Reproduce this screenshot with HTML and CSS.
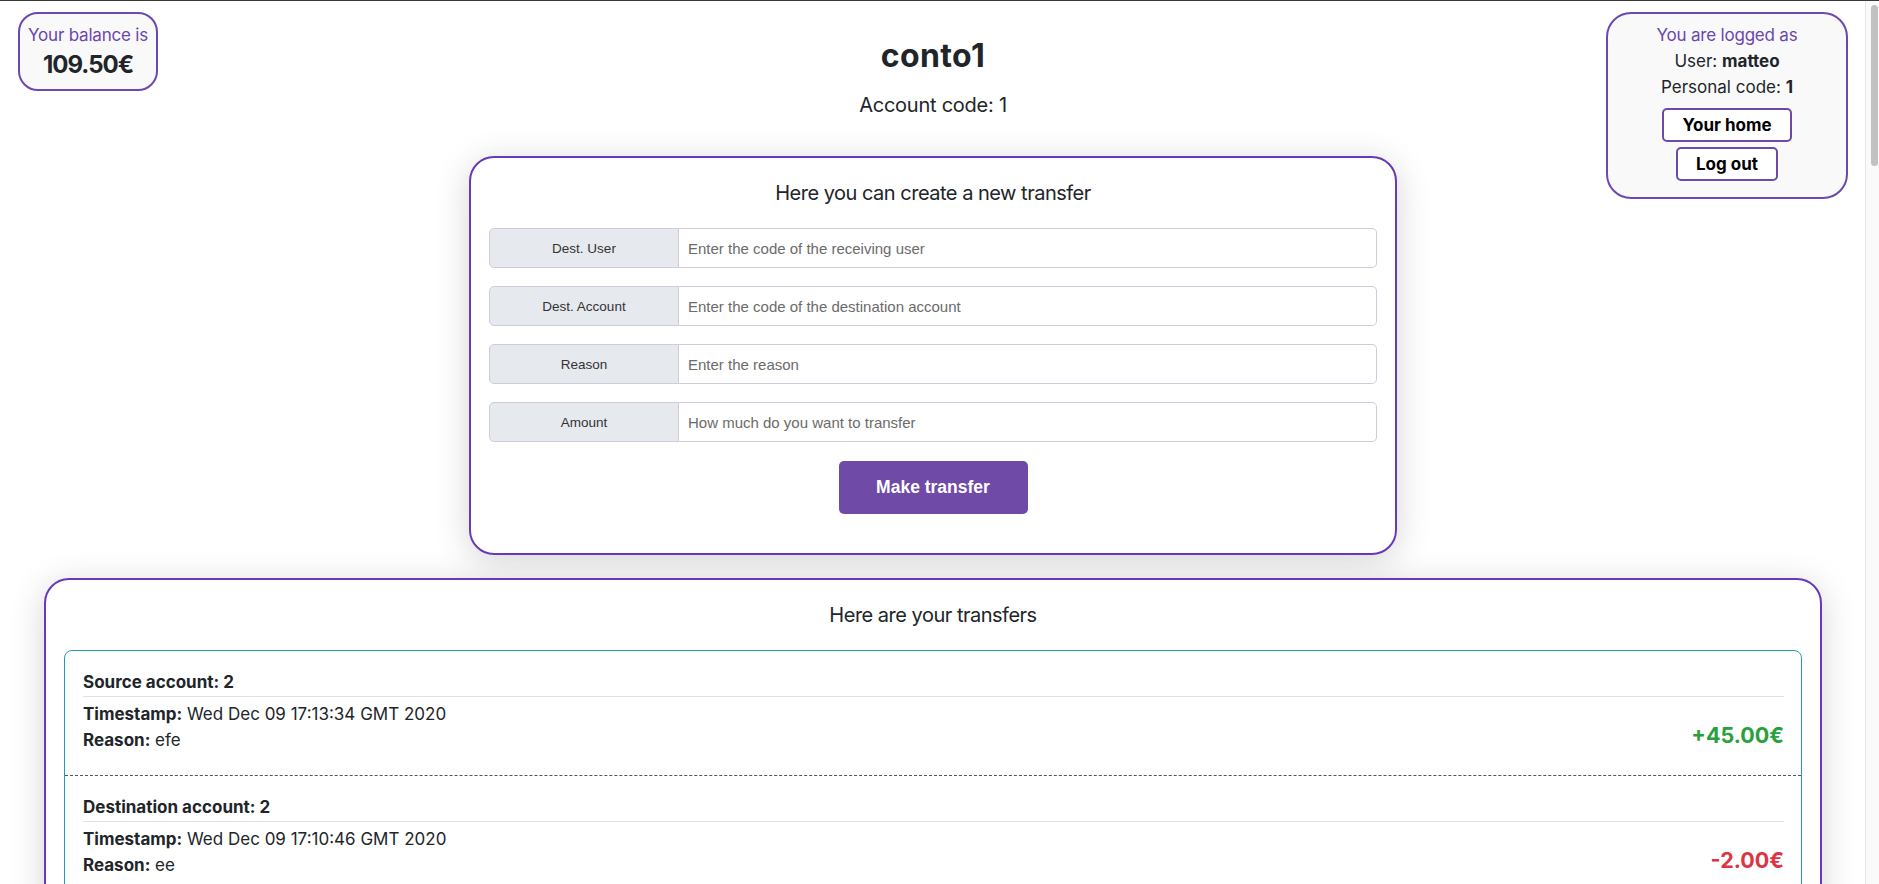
FILE: index.html
```html
<!DOCTYPE html>
<html lang="en">
<head>
<meta charset="utf-8">
<title>conto1</title>
<link rel="stylesheet" href="styles.css">
</head>
<body>
<div class="viewport">
  <div class="page">
    <header class="top">
      <div class="balance">
        <div class="label">Your balance is</div>
        <div class="balance-value">109.50€</div>
      </div>
      <div class="account-head">
        <h2 class="account-name">conto1</h2>
        <div class="account-code">Account code: 1</div>
      </div>
      <div class="logged">
        <div class="label">You are logged as</div>
        <div class="info">User: <b>matteo</b></div>
        <div class="info">Personal code: <b>1</b></div>
        <div class="logged-actions">
          <button class="outline-btn" type="button">Your home</button>
          <button class="outline-btn" type="button">Log out</button>
        </div>
      </div>
    </header>

    <section class="card form-card">
      <h3 class="card-title">Here you can create a new transfer</h3>
      <div class="field"><span class="addon">Dest. User</span><input class="field-input" type="text" placeholder="Enter the code of the receiving user"></div>
      <div class="field"><span class="addon">Dest. Account</span><input class="field-input" type="text" placeholder="Enter the code of the destination account"></div>
      <div class="field"><span class="addon">Reason</span><input class="field-input" type="text" placeholder="Enter the reason"></div>
      <div class="field"><span class="addon">Amount</span><input class="field-input" type="text" placeholder="How much do you want to transfer"></div>
      <button class="primary-btn" type="button">Make transfer</button>
    </section>

    <section class="card transfers-card">
      <h3 class="card-title">Here are your transfers</h3>
      <div class="transfer-list">
        <div class="transfer">
          <div class="transfer-head">Source account: 2</div>
          <div class="transfer-body">
            <div class="transfer-details">
              <div><b>Timestamp:</b> Wed Dec 09 17:13:34 GMT 2020</div>
              <div><b>Reason:</b> efe</div>
            </div>
            <div class="amount plus">+45.00€</div>
          </div>
        </div>
        <div class="transfer">
          <div class="transfer-head">Destination account: 2</div>
          <div class="transfer-body">
            <div class="transfer-details">
              <div><b>Timestamp:</b> Wed Dec 09 17:10:46 GMT 2020</div>
              <div><b>Reason:</b> ee</div>
            </div>
            <div class="amount minus">-2.00€</div>
          </div>
        </div>
      </div>
    </section>
  </div>
  <div class="scrollbar"><div class="thumb"></div></div>
</div>
</body>
</html>
```
FILE: styles.css
```css
html, body {
  margin: 0;
  height: 100%;
  overflow: hidden;
}
body {
  border-top: 1px solid #3a3a3a;
  box-sizing: border-box;
  font-family: Inter, "Noto Sans", sans-serif;
  color: #212529;
  background: #fff;
}
.viewport {
  display: flex;
  height: 883px;
}
.page {
  flex: 1;
  min-width: 0;
  overflow: hidden;
  padding: 11px 17px 0 18px;
}
.scrollbar {
  flex: none;
  width: 14px;
  box-sizing: border-box;
  background: #fafafa;
  border-left: 1px solid #e6e6e6;
  padding: 4px 1px 0 5px;
}
.thumb {
  height: 161px;
  background: #c1c1c1;
  border-radius: 4px;
}

/* header */
.top {
  display: grid;
  grid-template-columns: 1fr auto 1fr;
  height: 144px;
  align-items: start;
}
.balance {
  justify-self: start;
  width: 140px;
  box-sizing: border-box;
  border: 2px solid #6c48b0;
  border-radius: 20px;
  background: #f9f9f9;
  text-align: center;
  padding: 8px 0 9px;
}
.label {
  color: #6b46b0;
  font-size: 17px;
  line-height: 26px;
  letter-spacing: -0.2px;
}
.balance-value {
  font-size: 24px;
  font-weight: 700;
  line-height: 30px;
  margin-top: 2px;
  letter-spacing: -1px;
}
.account-head {
  text-align: center;
}
.account-name {
  margin: 25px 0 0;
  font-size: 32px;
  font-weight: 700;
  line-height: 38px;
  letter-spacing: 0.4px;
}
.account-code {
  margin-top: 18px;
  font-size: 20px;
  line-height: 24px;
  letter-spacing: -0.25px;
}
.logged {
  justify-self: end;
  width: 242px;
  box-sizing: border-box;
  border: 2px solid #6c48b0;
  border-radius: 25px;
  background: #f9f9f9;
  text-align: center;
  padding: 8px 0 16px;
}
.info {
  font-size: 17px;
  line-height: 26px;
}
.logged-actions {
  margin-top: 8px;
  display: flex;
  flex-direction: column;
  align-items: center;
  gap: 5px;
}
.outline-btn {
  height: 34px;
  padding: 0 18px;
  border: 2px solid #6d4aaa;
  border-radius: 5px;
  background: #fff;
  color: #000;
  font-family: Inter, "Noto Sans", sans-serif;
  font-size: 17px;
  font-weight: 700;
}

/* cards */
.card {
  border: 2px solid #673ab7;
  border-radius: 25px;
  background: #fff;
  box-shadow: 0 6px 34px rgba(0, 0, 0, 0.17);
}
.card-title {
  margin: 0 0 23px;
  font-size: 20px;
  font-weight: 400;
  line-height: 24px;
  text-align: center;
  letter-spacing: -0.5px;
}
.form-card {
  width: 928px;
  box-sizing: border-box;
  margin: 0 auto;
  padding: 23px 18px 39px;
}
.field {
  display: flex;
  height: 40px;
  margin-bottom: 18px;
}
.field:last-of-type {
  margin-bottom: 0;
}
.addon {
  flex: none;
  width: 190px;
  box-sizing: border-box;
  display: flex;
  align-items: center;
  justify-content: center;
  background: #e6e9ee;
  border: 1px solid #cfcbdc;
  border-radius: 5px 0 0 5px;
  font-family: "Liberation Sans", Arial, sans-serif;
  font-size: 13.5px;
  color: #333;
}
.field-input {
  flex: 1;
  min-width: 0;
  box-sizing: border-box;
  height: 40px;
  margin: 0;
  padding: 0 9px;
  border: 1px solid #cfcbdc;
  border-left: none;
  border-radius: 0 5px 5px 0;
  background: #fff;
  outline: none;
  font-family: "Liberation Sans", Arial, sans-serif;
  font-size: 15px;
  color: #333;
}
.field-input::placeholder {
  color: #6b6b6b;
  opacity: 1;
}
.primary-btn {
  display: block;
  width: 189px;
  height: 53px;
  margin: 19px auto 0;
  border: none;
  border-radius: 5px;
  background: #6f4aa7;
  color: #fff;
  font-family: "Liberation Sans", Arial, sans-serif;
  font-size: 17.5px;
  font-weight: 700;
}

.transfers-card {
  margin: 23px 26px 0 26px;
  padding: 23px 18px 30px;
}
.transfer-list {
  border: 1px solid #2a9aa9;
  border-radius: 8px;
}
.transfer {
  padding: 18px 17px 22px 18px;
  font-size: 17px;
  line-height: 26px;
}
.transfer + .transfer {
  border-top: 1px dashed #555;
}
.transfer-head {
  font-weight: 700;
  padding-bottom: 1px;
  border-bottom: 1px solid #e2e2e2;
}
.transfer-body {
  display: flex;
  justify-content: space-between;
  align-items: flex-end;
  margin-top: 4px;
}
.amount {
  font-size: 21.5px;
  font-weight: 700;
  margin-bottom: 5px;
}
.plus { color: #28a03c; }
.minus { color: #dc3545; }
```
